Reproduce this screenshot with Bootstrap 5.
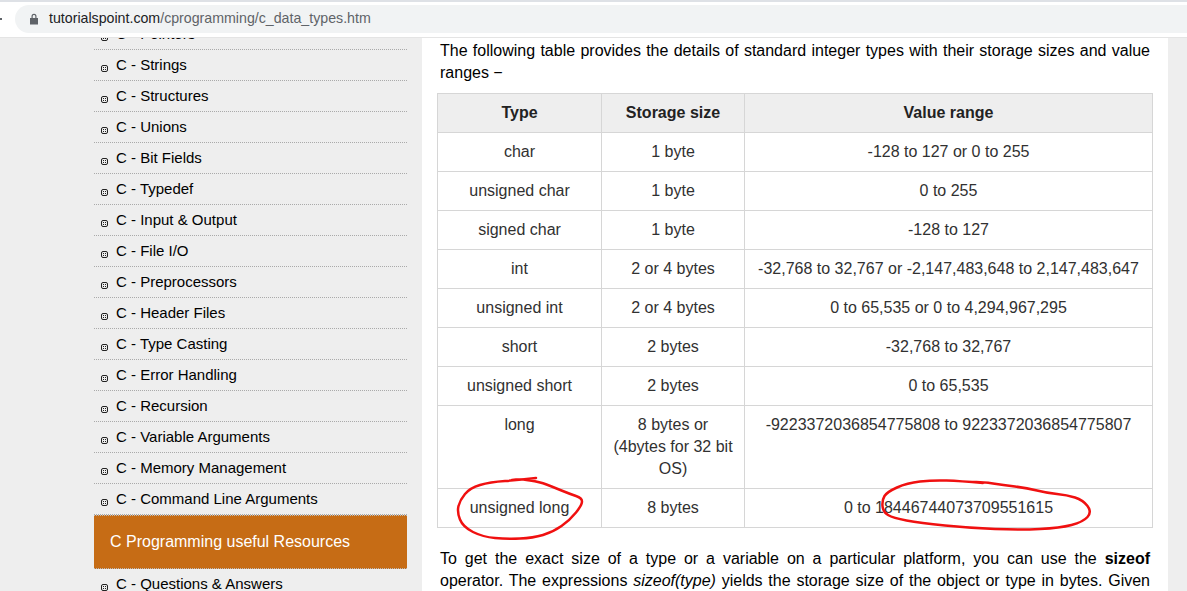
<!DOCTYPE html>
<html lang="en">
<head>
  <meta charset="UTF-8" />
  <title>C Data Types</title>
  <link href="https://cdn.jsdelivr.net/npm/bootstrap@5.3.0/dist/css/bootstrap.min.css" rel="stylesheet" />
  <style>
    html, body { height: 591px; overflow: hidden; }
    body { background: #eee; font-family: "Liberation Sans", Arial, sans-serif; color: #000; font-size: 16px; }
    .top-strip { height: 38px; background: #fff; position: relative; z-index: 5; border-bottom: 1px solid #e4e4e4; }
    .top-edge { height: 2px; background: #dee1e6; margin-bottom: 3px; }
    .url-pill { height: 28px; margin-left: 15px; background: #f1f3f4; border-radius: 14px 0 0 14px; padding-left: 14px; gap: 10px; font-size: 14.2px; color: #5f6368; }
    .url-host { color: #202124; }
    .back-tick { left: 0; top: 18px; width: 2px; height: 2px; background: #5f6368; }
    .page-wrap { height: 553px; overflow: hidden; position: relative; }
    .side-col { width: 313px; margin-left: 94px; margin-top: -19px; flex: none; }
    .side-item { height: 31px; border-bottom: 1px dotted #aaa; padding-left: 7px; gap: 8px; font-size: 15px; color: #000; }
    .side-item svg { flex: none; margin-top: 6px; }
    .side-head { height: 54px; background: #c66c15; border-top: 1px dotted #bbb; border-bottom: 1px dotted #bbb; color: #fff; padding-left: 16px; font-size: 16px; }
    .main-col { width: 746px; margin-left: 15px; background: #fff; padding: 0 18px; flex: none; height: 553px; }
    .main-col p { text-align: justify; line-height: 22px; margin: 0; }
    .intro { padding-top: 2px; }
    .types-table { width: 715px; margin: 9px 0 0 -3px; border-collapse: collapse; table-layout: fixed; color: #313131; }
    .types-table th, .types-table td { border: 1px solid #d6d6d6; padding: 8px; text-align: center; vertical-align: top; line-height: 22px; font-size: 16px; }
    .types-table th { background: #eee; font-weight: 700; color: #222; }
    .main-col .outro { margin-top: 20px; text-align-last: justify; }
    .ink-layer { position: absolute; left: 0; top: 0; z-index: 3; pointer-events: none; }
  </style>
</head>
<body>
  <div class="top-strip position-relative">
    <div class="top-edge"></div>
    <span class="back-tick position-absolute"></span>
    <div class="url-pill d-flex align-items-center">
      <svg width="10" height="12" viewBox="0 0 10 12"><path fill="#5f6368" d="M1 5h8v6.500H1zM2.500 5V3.300a2.500 2.500 0 0 1 5 0V5H6.300V3.300a1.300 1.300 0 0 0-2.600 0V5z"/></svg>
      <span><span class="url-host">tutorialspoint.com</span>/cprogramming/c_data_types.htm</span>
    </div>
  </div>

  <div class="page-wrap d-flex align-items-start">
    <div class="side-col" id="sideList"></div>

    <div class="main-col">
      <p class="intro">The following table provides the details of standard integer types with their storage sizes and value ranges −</p>
      <table class="types-table">
        <colgroup><col style="width:164px"><col style="width:143px"><col style="width:408px"></colgroup>
        <tr><th>Type</th><th>Storage size</th><th>Value range</th></tr>
        <tr><td>char</td><td>1 byte</td><td>-128 to 127 or 0 to 255</td></tr>
        <tr><td>unsigned char</td><td>1 byte</td><td>0 to 255</td></tr>
        <tr><td>signed char</td><td>1 byte</td><td>-128 to 127</td></tr>
        <tr><td>int</td><td>2 or 4 bytes</td><td>-32,768 to 32,767 or -2,147,483,648 to 2,147,483,647</td></tr>
        <tr><td>unsigned int</td><td>2 or 4 bytes</td><td>0 to 65,535 or 0 to 4,294,967,295</td></tr>
        <tr><td>short</td><td>2 bytes</td><td>-32,768 to 32,767</td></tr>
        <tr><td>unsigned short</td><td>2 bytes</td><td>0 to 65,535</td></tr>
        <tr><td>long</td><td>8 bytes or (4bytes for 32 bit OS)</td><td>-9223372036854775808 to 9223372036854775807</td></tr>
        <tr><td>unsigned long</td><td>8 bytes</td><td>0 to 18446744073709551615</td></tr>
      </table>
      <p class="outro">To get the exact size of a type or a variable on a particular platform, you can use the <b>sizeof</b> operator. The expressions <i>sizeof(type)</i> yields the storage size of the object or type in bytes. Given</p>
    </div>

    <svg class="ink-layer" width="1187" height="553" viewBox="0 38 1187 553" fill="none" stroke="#f01010" stroke-width="2.500" stroke-linecap="round" stroke-linejoin="round">
      <path id="inkLeft"/>
      <path id="inkRight"/>
    </svg>
  </div>

  <script>
    const sideTop = ['Pointers','Strings','Structures','Unions','Bit Fields','Typedef','Input &amp; Output','File I/O','Preprocessors','Header Files','Type Casting','Error Handling','Recursion','Variable Arguments','Memory Management','Command Line Arguments'];
    const bullet = '<svg width="7" height="7" viewBox="0 0 7 7"><rect x=".5" y=".5" width="6" height="6" rx="1.500" fill="#eee" stroke="#222"/><path fill="#222" d="M2 2h1v1H2zM4 2h1v1H4zM2 4h1v1H2zM4 4h1v1H4z"/></svg>';
    const row = t => `<div class="side-item d-flex align-items-center">${bullet}<span>C - ${t}</span></div>`;
    document.getElementById('sideList').innerHTML =
      sideTop.map(row).join('') +
      '<div class="side-head d-flex align-items-center">C Programming useful Resources</div>' +
      row('Questions &amp; Answers');

    // red pen marks, smoothed through the traced points
    function smooth(pts) {
      let d = `M${pts[0]}`;
      for (let i = 1; i < pts.length - 1; i++) {
        const mx = (pts[i][0] + pts[i + 1][0]) / 2, my = (pts[i][1] + pts[i + 1][1]) / 2;
        d += `Q${pts[i]} ${mx},${my}`;
      }
      return d + `L${pts[pts.length - 1]}`;
    }
    document.getElementById('inkLeft').setAttribute('d', smooth([[536,478],[520,480],[490,482],[470,488],[460,500],[457,512],[463,527],[483,537],[507,539],[533,538],[553,532],[570,520],[582,505],[582,498],[570,494],[553,487],[540,482],[520,479],[512,480]]));
    document.getElementById('inkRight').setAttribute('d', smooth([[983,483],[960,481],[933,480],[907,483],[887,492],[882,500],[883,512],[893,518],[920,523],[970,528],[1020,530],[1060,528],[1083,522],[1092,512],[1083,500],[1067,495],[1047,493],[1027,488],[1003,485],[983,482],[970,482]]));
  </script>
  <script src="https://cdn.jsdelivr.net/npm/bootstrap@5.3.0/dist/js/bootstrap.bundle.min.js"></script>
</body>
</html>
